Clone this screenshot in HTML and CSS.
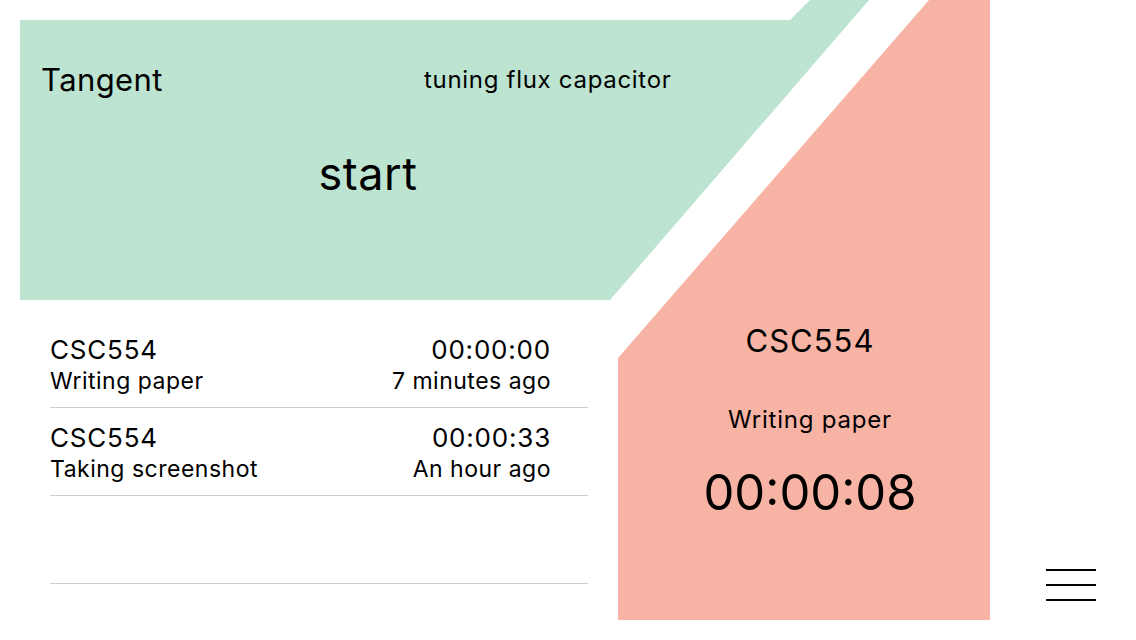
FILE: index.html
```html
<!DOCTYPE html>
<html lang="en">
<head>
<meta charset="utf-8">
<title>Tangent</title>
<link rel="stylesheet" href="styles.css">
</head>
<body>
<div class="app">
  <section class="hero">
    <div class="hero-head">
      <div class="brand">Tangent</div>
      <div class="status">tuning flux capacitor</div>
    </div>
    <div class="start">start</div>
  </section>

  <section class="current">
    <div class="cur-title">CSC554</div>
    <div class="cur-task">Writing paper</div>
    <div class="cur-timer">00:00:08</div>
  </section>

  <ul class="log">
    <li class="entry">
      <div class="entry-line">
        <span class="entry-title">CSC554</span>
        <span class="entry-time">00:00:00</span>
      </div>
      <div class="entry-line">
        <span class="entry-task">Writing paper</span>
        <span class="entry-ago">7 minutes ago</span>
      </div>
    </li>
    <li class="entry">
      <div class="entry-line">
        <span class="entry-title">CSC554</span>
        <span class="entry-time">00:00:33</span>
      </div>
      <div class="entry-line">
        <span class="entry-task">Taking screenshot</span>
        <span class="entry-ago">An hour ago</span>
      </div>
    </li>
    <li class="entry entry-empty"></li>
  </ul>

  <button class="menu" aria-label="Menu">
    <span class="bar"></span>
    <span class="bar"></span>
    <span class="bar"></span>
  </button>
</div>
</body>
</html>
```

FILE: styles.css
```css
* { box-sizing: border-box; }

html, body {
  margin: 0;
  padding: 0;
  background: #ffffff;
}

body {
  font-family: Inter, "Noto Sans", "Liberation Sans", sans-serif;
  color: #000;
  width: 1136px;
  height: 640px;
  overflow: hidden;
}

.app {
  display: grid;
  grid-template-columns: 20px 598px 251px 121px 146px;
  grid-template-rows: 300px 320px 20px;
  width: 1136px;
  height: 640px;
}

/* green panel */
.hero {
  grid-column: 2 / 4;
  grid-row: 1 / 2;
  background: #bde3d1;
  clip-path: polygon(0 20px, 770px 20px, 790px 0, 849px 0, 590px 300px, 0 300px);
  padding-top: 60px;
}

.hero-head {
  display: grid;
  grid-template-columns: 404px 240px;
  height: 40px;
  align-items: center;
}

.brand {
  padding-left: 21px;
  font-size: 31px;
  letter-spacing: 0.4px;
  line-height: 40px;
}

.status {
  text-align: center;
  font-size: 24px;
  letter-spacing: 0.7px;
  line-height: 40px;
  white-space: nowrap;
}

.start {
  width: 696px;
  margin-top: 44px;
  text-align: center;
  font-size: 45px;
  letter-spacing: 0.5px;
  line-height: 60px;
}

/* pink panel */
.current {
  grid-column: 3 / 5;
  grid-row: 1 / 3;
  background: #f7b3a4;
  clip-path: polygon(311px 0, 372px 0, 372px 620px, 0 620px, 0 358px);
  padding-top: 321px;
  padding-left: 12px;
  text-align: center;
}

.cur-title {
  font-size: 31px;
  letter-spacing: 1px;
  line-height: 40px;
}

.cur-task {
  margin-top: 44px;
  font-size: 24px;
  letter-spacing: 0.8px;
  line-height: 30px;
}

.cur-timer {
  margin-top: 28px;
  font-size: 49px;
  line-height: 60px;
}

/* history list */
.log {
  grid-column: 2 / 3;
  grid-row: 2 / 3;
  list-style: none;
  margin: 0;
  padding: 20px 30px 0 30px;
}

.entry {
  height: 88px;
  padding: 13px 37px 0 0;
  border-bottom: 1px solid #cfcfcf;
}

.entry-line {
  display: flex;
  justify-content: space-between;
  align-items: center;
  height: 32px;
}

.entry-title,
.entry-time {
  font-size: 26px;
  letter-spacing: 0.8px;
}

.entry-task,
.entry-ago {
  font-size: 23px;
  letter-spacing: 0.5px;
}

/* hamburger */
.menu {
  grid-column: 5 / 6;
  grid-row: 2 / 3;
  align-self: end;
  justify-self: start;
  margin: 0 0 19px 56px;
  padding: 0;
  border: 0;
  background: transparent;
  width: 50px;
  display: flex;
  flex-direction: column;
  gap: 13px;
}

.bar {
  display: block;
  width: 50px;
  height: 2px;
  background: #000;
}
```
